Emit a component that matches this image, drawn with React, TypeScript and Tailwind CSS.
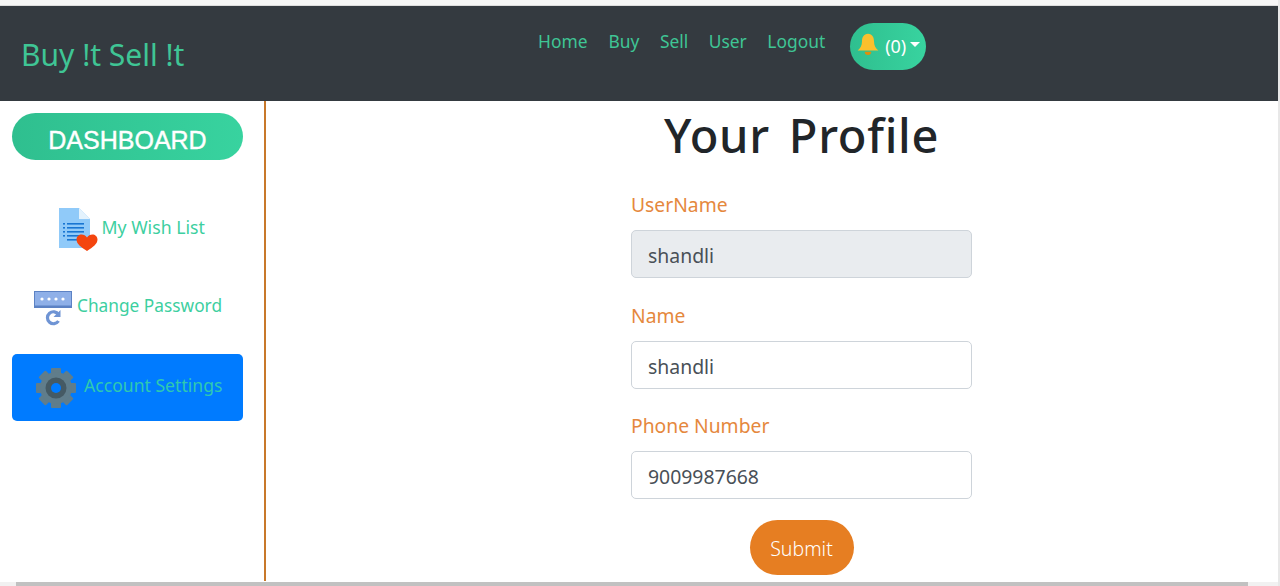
const font = "font-['Noto_Sans','Open_Sans',sans-serif]";

function WishIcon() {
  return (
    <svg width="40" height="46" viewBox="0 0 40 46" className="shrink-0">
      <path d="M0 0H20L31 11V40H0Z" fill="#90caf9" />
      <path d="M20 0L31 11H20Z" fill="#e3f2fd" />
      <g fill="#1976d2">
        <rect x="8" y="15" width="17" height="1.6" />
        <rect x="8" y="19" width="17" height="1.6" />
        <rect x="8" y="23" width="17" height="1.6" />
        <rect x="8" y="27" width="17" height="1.6" />
        <rect x="8" y="31" width="12" height="1.6" />
        <rect x="4" y="15" width="2" height="1.6" />
        <rect x="4" y="19" width="2" height="1.6" />
        <rect x="4" y="23" width="2" height="1.6" />
        <rect x="4" y="27" width="2" height="1.6" />
      </g>
      <path d="M28 43C22 39 17.500 36 17.500 31.500C17.500 28.500 20 26.500 22.500 26.500C24.800 26.500 26.800 27.500 28 29.500C29.200 27.500 31.200 26.500 33.500 26.500C36 26.500 38.500 28.500 38.500 31.500C38.500 36 34 39 28 43Z" fill="#f4450f" />
    </svg>
  );
}

function PasswordIcon() {
  return (
    <svg width="40" height="36" viewBox="0 0 40 36" className="shrink-0">
      <rect x="0.500" y="0.500" width="37" height="16" fill="#8fb0e8" stroke="#5c82c4" />
      <rect x="0.500" y="14.500" width="37" height="2" fill="#5c82c4" />
      <g fill="#fff">
        <circle cx="8" cy="8" r="1.600" />
        <circle cx="15" cy="8" r="1.600" />
        <circle cx="22" cy="8" r="1.600" />
        <circle cx="29" cy="8" r="1.600" />
      </g>
      <path d="M24.500 23.500A6 6 0 1 0 24.500 30" fill="none" stroke="#6f94d4" strokeWidth="3.200" />
      <path d="M26.500 19V26H19.500Z" fill="#6f94d4" />
    </svg>
  );
}

function GearIcon() {
  const teeth = [0, 45, 90, 135, 180, 225, 270, 315];
  return (
    <svg width="40" height="40" viewBox="0 0 40 40" className="shrink-0">
      {teeth.map((a) => (
        <rect key={a} x="15" y="0" width="10" height="10" rx="1" fill="#607d8b" transform={`rotate(${a} 20 20)`} />
      ))}
      <circle cx="20" cy="20" r="16" fill="#607d8b" />
      <circle cx="20" cy="20" r="10.500" fill="#455a64" />
      <circle cx="20" cy="20" r="5" fill="#007bff" />
    </svg>
  );
}

function Field({ label, value, disabled }: { label: string; value: string; disabled?: boolean }) {
  return (
    <div className="mb-[22.500px]">
      <label className="block mb-[10px] text-[19.300px] leading-[30px] text-[#e5883d]">{label}</label>
      <input
        readOnly
        value={value}
        className={`block w-[341px] h-[48px] px-[16px] pt-[3px] text-[19.400px] text-[#495057] border border-[#ced4da] rounded-[5px] outline-none ${font} ${disabled ? "bg-[#e9ecef]" : "bg-white"}`}
      />
    </div>
  );
}

export default function App() {
  return (
    <div className={`relative w-[1280px] h-[586px] overflow-hidden bg-white ${font}`}>
      <div className="h-[5px] bg-[#f6f6f6] border-b border-[#ddd] box-content" />
      <nav className="w-[1278px] h-[95px] bg-[#343a40] flex">
        <a className="ml-[21px] mt-[26px] text-[30px] leading-[46px] text-[#3fc595] w-[240px] shrink-0">Buy !t Sell !t</a>
        <ul className="flex ml-[277px] mt-[20px] text-[17.400px] leading-[30px] text-[#3fc595] h-[30px]">
          <li>Home</li>
          <li className="ml-[21px]">Buy</li>
          <li className="ml-[20.500px]">Sell</li>
          <li className="ml-[20.500px]">User</li>
          <li className="ml-[20.500px]">Logout</li>
        </ul>
        <button className="ml-[25px] mt-[17px] w-[76px] h-[47px] rounded-full bg-gradient-to-r from-[#2fbf8f] to-[#38d39f] text-white text-[18px] flex items-center justify-center">
          <svg width="24" height="24" viewBox="0 0 22 22" className="mr-[5px] -mt-[5px]">
            <path d="M11 1.500C7 1.500 5.500 5 5.500 8.500C5.500 12.500 4 15 1.500 17H20.500C18 15 16.500 12.500 16.500 8.500C16.500 5 15 1.500 11 1.500Z" fill="#fbc02d" />
            <path d="M8 18H14C14 20 12.800 21 11 21C9.200 21 8 20 8 18Z" fill="#e08e0b" />
          </svg>
          (0)
          <span className="ml-[4px] mb-[4px] border-x-[5px] border-x-transparent border-t-[5px] border-t-white" />
        </button>
      </nav>
      <div className="flex h-[480px]">
        <aside className="w-[266px] shrink-0 border-r-2 border-[#c8782a] pl-[12px] pr-[21px] pt-[12px]">
          <div className="h-[47px] rounded-full bg-gradient-to-r from-[#2fbf8f] to-[#38d39f] text-white text-center text-[25px] leading-[54px] font-['Liberation_Sans',sans-serif] [-webkit-text-stroke:0.4px_white]">
            DASHBOARD
          </div>
          <div className="mt-[48px] h-[46px] flex items-center pl-[46.500px] text-[#3dcf9f] text-[17.700px]">
            <WishIcon />
            <span className="ml-[3px] -mt-[8px]">My Wish List</span>
          </div>
          <div className="mt-[37px] h-[36px] flex items-center pl-[22px] text-[#3dcf9f] text-[17.300px]">
            <PasswordIcon />
            <span className="ml-[3px] -mt-[7px]">Change Password</span>
          </div>
          <div className="mt-[27px] h-[67px] rounded-[5px] bg-[#007bff] flex items-center pl-[24px] text-[#2fc9b0] text-[17.600px]">
            <GearIcon />
            <span className="ml-[8px] -mt-[4px]">Account Settings</span>
          </div>
        </aside>
        <main className="flex-1 flex flex-col items-center pl-[57px]">
          <h1 className="mt-[2px] mb-[23px] text-[47px] leading-[64px] font-medium text-[#212529] tracking-[0.7px] [word-spacing:6px]">Your Profile</h1>
          <div className="w-[341px]">
            <Field label="UserName" value="shandli" disabled />
            <Field label="Name" value="shandli" />
            <Field label="Phone Number" value="9009987668" />
          </div>
          <button className="-mt-[2px] w-[104px] h-[55px] pt-[3px] rounded-full bg-[#e67e22] text-white text-[19.500px] font-light">Submit</button>
        </main>
      </div>
      <div className="absolute left-0 right-0 bottom-0 h-[4px] bg-[#f1f1f1]">
        <div className="ml-[16px] w-[1232px] h-full bg-[#c1c1c1]" />
      </div>
      <div className="absolute right-0 top-0 bottom-0 w-[2px] bg-[#e8e8e8]" />
    </div>
  );
}
